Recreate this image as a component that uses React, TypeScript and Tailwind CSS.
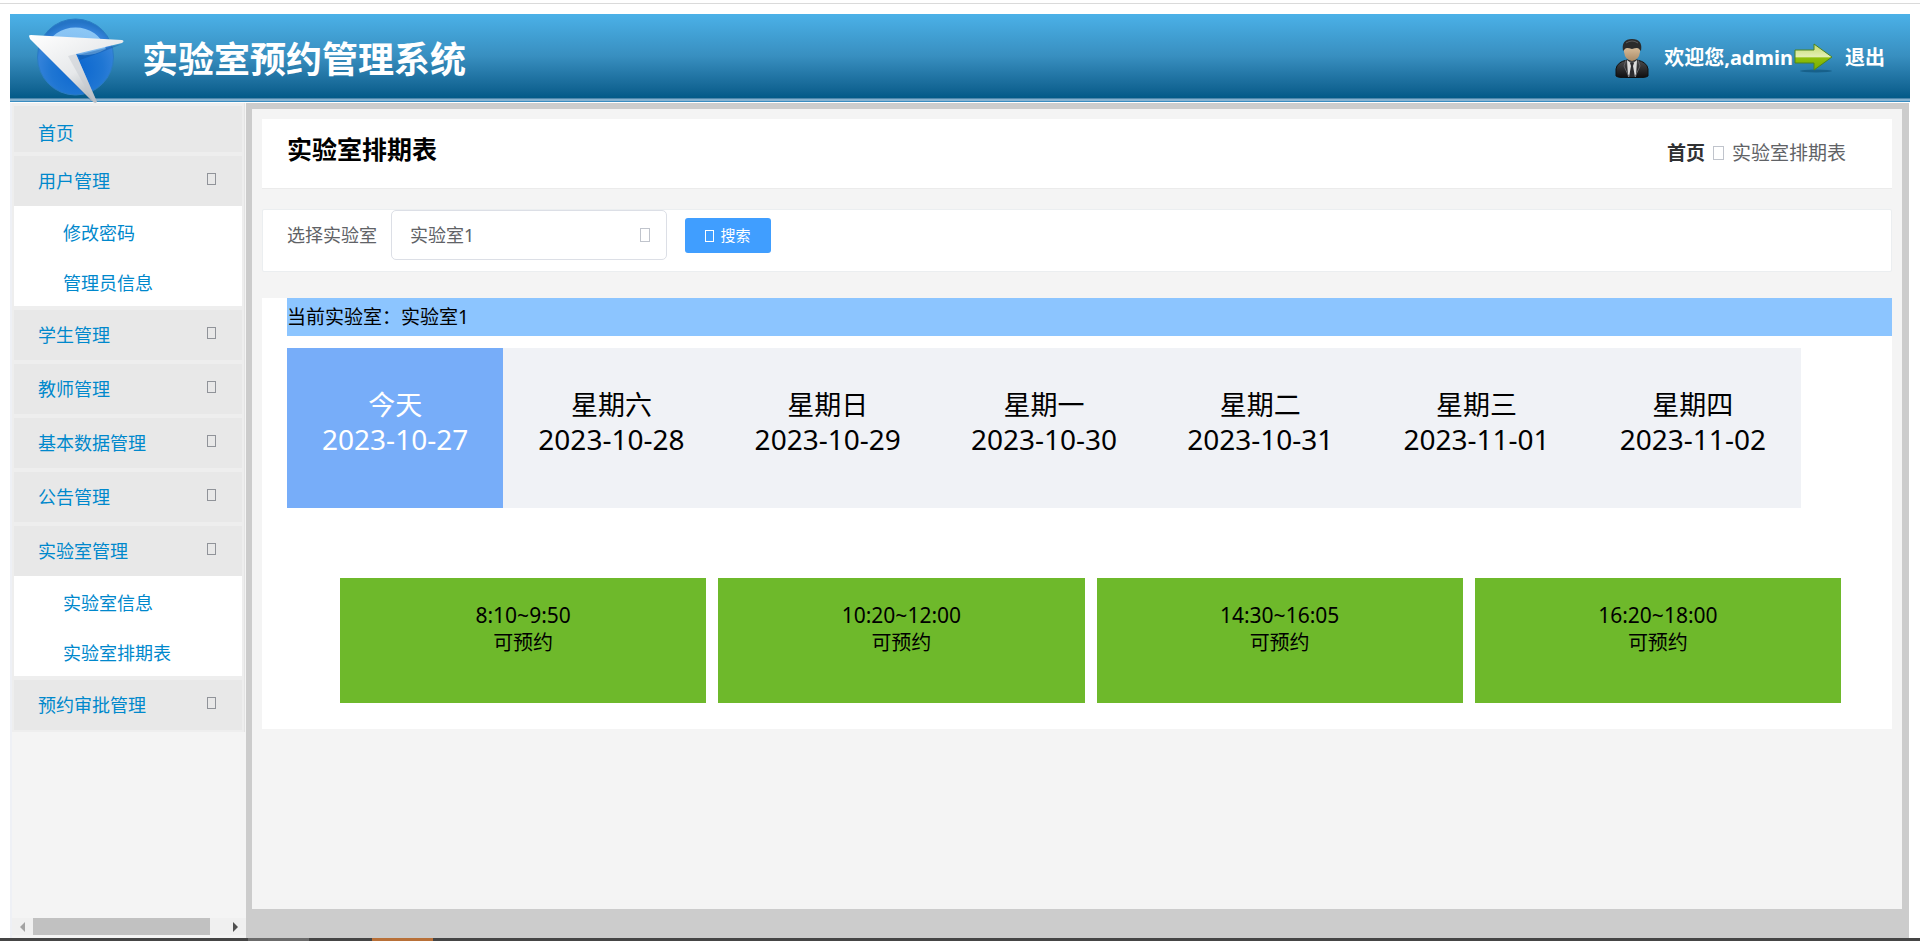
import { clsx } from "clsx";

type MenuEntry = {
  title: string;
  children?: string[];
};

const MENU: MenuEntry[] = [
  { title: "用户管理", children: ["修改密码", "管理员信息"] },
  { title: "学生管理" },
  { title: "教师管理" },
  { title: "基本数据管理" },
  { title: "公告管理" },
  { title: "实验室管理", children: ["实验室信息", "实验室排期表"] },
  { title: "预约审批管理" },
];

const DAYS = [
  { label: "今天", date: "2023-10-27" },
  { label: "星期六", date: "2023-10-28" },
  { label: "星期日", date: "2023-10-29" },
  { label: "星期一", date: "2023-10-30" },
  { label: "星期二", date: "2023-10-31" },
  { label: "星期三", date: "2023-11-01" },
  { label: "星期四", date: "2023-11-02" },
];

const SLOTS = ["8:10~9:50", "10:20~12:00", "14:30~16:05", "16:20~18:00"];

/** The empty box that stands where an icon font glyph is missing. */
function GlyphBox({ className }: { className?: string }) {
  return <span aria-hidden className={clsx("inline-block shrink-0 border", className)} />;
}

function Logo() {
  return (
    <svg aria-hidden viewBox="0 0 96 88" className="mt-1 h-22 w-24 shrink-0">
      <defs>
        <radialGradient id="globe" cx="0.52" cy="0.66" r="0.62">
          <stop offset="0" stopColor="#0b66cf" />
          <stop offset="0.55" stopColor="#1f76d3" />
          <stop offset="0.85" stopColor="#3583da" />
          <stop offset="1" stopColor="#2474c6" />
        </radialGradient>
        <linearGradient id="globeShine" x1="0.6" y1="0" x2="0.4" y2="1">
          <stop offset="0" stopColor="#8cc8f6" />
          <stop offset="1" stopColor="#a8d6fa" stopOpacity="0.6" />
        </linearGradient>
        <linearGradient id="wing" x1="0" y1="0" x2="0.7" y2="1">
          <stop offset="0" stopColor="#ffffff" />
          <stop offset="0.6" stopColor="#e6e8ea" />
          <stop offset="1" stopColor="#a9afb5" />
        </linearGradient>
      </defs>
      <circle cx="47.5" cy="41" r="38" fill="url(#globe)" stroke="#2a7cc4" />
      <path d="M17 33A32 31 0 0 1 78 33Q62 42 48 38Q32 32 17 33Z" fill="url(#globeShine)" />
      <path d="M2 22L64 86L56 72L10 26Z" fill="#0a4b94" opacity="0.35" />
      <path d="M50 39L94 28L74 36L52 44Z" fill="#0a4b94" opacity="0.35" />
      <path d="M1 20Q1 19 3 19L94 24Q97 25 94 27L48 38L69 86Q67 88 64 85L2 23Z" fill="url(#wing)" />
      <path d="M48 38L69 86L66 87L40 40Z" fill="#c5cacf" opacity="0.5" />
    </svg>
  );
}

function UserIcon() {
  return (
    <svg aria-hidden viewBox="0 0 34 40" className="h-10 w-[34px]">
      <defs>
        <linearGradient id="face" x1="0" y1="0" x2="0" y2="1">
          <stop offset="0" stopColor="#ead2b0" />
          <stop offset="1" stopColor="#a98a66" />
        </linearGradient>
        <linearGradient id="suit" x1="0" y1="0" x2="0" y2="1">
          <stop offset="0" stopColor="#4b4b4d" />
          <stop offset="1" stopColor="#0d0d0f" />
        </linearGradient>
      </defs>
      <path d="M1 38V31Q2 24 12 22H22Q32 24 33 31V38Q31 40 17 40Q3 40 1 38Z" fill="url(#suit)" stroke="#111" />
      <path d="M12 22L17 26L22 22L21 39H13Z" fill="#dcdcdc" />
      <path d="M15 25H19L18 28L20 39H14L16 28Z" fill="#2c2c30" />
      <path d="M11 22L9 28L14 39M23 22L25 28L20 39" fill="none" stroke="#606064" />
      <path d="M9 9Q9 4 17 4Q25 4 25 9V14Q24 22 17 23Q10 22 9 14Z" fill="url(#face)" />
      <path d="M8 13Q6 1 17 1Q28 1 26 13L24 11Q23 9 17 11Q11 9 10 11Z" fill="#2b2b2b" />
      <path d="M11 5Q17 1 23 5" fill="none" stroke="#5b5b5b" />
    </svg>
  );
}

function ArrowIcon() {
  return (
    <svg aria-hidden viewBox="0 0 40 30" className="h-[30px] w-10">
      <defs>
        <linearGradient id="arrow" x1="0" y1="0" x2="0" y2="1">
          <stop offset="0" stopColor="#c3da6a" />
          <stop offset="0.48" stopColor="#e4efb4" />
          <stop offset="0.54" stopColor="#8fbf0c" />
          <stop offset="1" stopColor="#77ae00" />
        </linearGradient>
      </defs>
      <ellipse cx="23" cy="28" rx="16" ry="1.5" fill="#0b4a70" opacity="0.55" />
      <path d="M2 7H21V1L39 14L21 27V20H2Z" fill="url(#arrow)" stroke="#4c8420" strokeLinejoin="round" />
    </svg>
  );
}

function Header() {
  return (
    <header className="mx-2.5 flex h-[89px] flex-col">
      <div className="flex h-21 items-center justify-between bg-linear-to-b from-[#4bb1e8] via-[#388fc0] to-[#035a88] pt-1 pr-[25px] pl-[18px] text-white">
        <div className="relative z-10 flex items-center">
          <Logo />
          <h1 className="ml-[18px] pt-1 text-4xl font-bold">实验室预约管理系统</h1>
        </div>
        <div className="flex items-center text-xl font-bold">
          <UserIcon />
          <span className="ml-[15px]">欢迎您,admin</span>
          <ArrowIcon />
          <a href="#logout" className="ml-3">
            退出
          </a>
        </div>
      </div>
      <div className="h-1 border-t border-b border-t-[#4d87ab] border-b-[#3a8cc0] bg-[#86b2d0]" />
    </header>
  );
}

function Sidebar() {
  return (
    <aside className="flex w-[236px] shrink-0 flex-col border-l-2 border-[#eef0f5] bg-[#f4f4f4]">
      <nav className="mr-px flex flex-col gap-1 border-r border-[#e4e4e4] bg-[#eeeeee] pt-[3px] pr-0.5 pb-0.5 pl-0.5 text-lg text-[#0088cc]">
        <a href="#home" className="flex h-[46px] items-center bg-[#e8e8e8] pt-2 pl-6">
          首页
        </a>
        {MENU.map((entry) => (
          <div key={entry.title}>
            <button
              type="button"
              className="flex h-[50px] w-full items-center justify-between bg-[#e8e8e8] pr-[26px] pl-6"
            >
              {entry.title}
              <GlyphBox className="mb-1 h-3 w-[9px] border-[#909399]" />
            </button>
            {entry.children?.map((child) => (
              <a key={child} href="#menu" className="flex h-[50px] items-center bg-white pt-1 pl-[49px]">
                {child}
              </a>
            ))}
          </div>
        ))}
      </nav>

      {/* Horizontal scroll track of the menu pane */}
      <div className="mt-auto mb-[3px] flex h-[17px] items-center bg-[#f0f0f0] pr-2 pl-2">
        <svg aria-hidden viewBox="0 0 5 10" className="h-2.5 w-[5px]">
          <path d="M5 0V10L0 5Z" fill="#a3a3a3" />
        </svg>
        <span className="ml-2 h-full w-[177px] bg-[#c1c1c1]" />
        <svg aria-hidden viewBox="0 0 5 10" className="ml-auto h-2.5 w-[5px]">
          <path d="M0 0V10L5 5Z" fill="#505050" />
        </svg>
      </div>
    </aside>
  );
}

function SearchForm() {
  return (
    <form
      onSubmit={(event) => event.preventDefault()}
      className="mt-5 flex h-[63px] items-start rounded-xs border border-[#ebeef0] bg-white pl-6 text-lg text-[#606266]"
    >
      <label htmlFor="lab" className="pt-[11px]">
        选择实验室
      </label>
      <div className="relative ml-3.5">
        <select
          id="lab"
          className="h-[50px] w-[276px] appearance-none rounded-[5px] border border-[#dcdfe6] bg-white pl-[18px]"
        >
          <option>实验室1</option>
        </select>
        <GlyphBox className="pointer-events-none absolute top-[18px] right-[17px] h-3.5 w-2.5 border-[#c0c4cc]" />
      </div>
      <button
        type="submit"
        className="mt-2 ml-[18px] flex h-[35px] w-[86px] items-center justify-center gap-1.5 rounded-[3px] bg-[#409eff] text-[15px] text-white"
      >
        <GlyphBox className="h-3 w-[9px] border-white" />
        搜索
      </button>
    </form>
  );
}

function Schedule() {
  return (
    <section className="mt-[26px] bg-white pb-[26px] pl-[25px]">
      <p className="flex h-[38px] items-center bg-[#8cc5ff] text-[19px] text-black">当前实验室：实验室1</p>

      <div className="mt-3 mr-[91px] grid grid-cols-7 bg-[#f0f2f6]">
        {DAYS.map((day, index) => (
          <button
            key={day.date}
            type="button"
            className={clsx(
              "flex h-40 flex-col items-center pt-10 leading-[34px]",
              index === 0 ? "bg-[#77adf9] text-white" : "text-black",
            )}
          >
            <span className="text-[27px]">{day.label}</span>
            <span className="text-[28px]">{day.date}</span>
          </button>
        ))}
      </div>

      <div className="mt-[70px] mr-[51px] ml-[53px] grid grid-cols-4 gap-3 leading-[27px] text-black">
        {SLOTS.map((slot) => (
          <button key={slot} type="button" className="flex h-[125px] flex-col items-center bg-[#6eb92b] pt-6">
            <span className="text-[21px]">{slot}</span>
            <span className="text-[20px]">可预约</span>
          </button>
        ))}
      </div>
    </section>
  );
}

export default function App() {
  return (
    <div className="flex min-h-screen flex-col bg-white font-['Noto_Sans','Noto_Sans_CJK_SC',sans-serif]">
      <div className="mb-2.5 h-1 border-b border-[#dadada]" />
      <Header />

      <div className="mr-[11px] ml-2.5 flex flex-1">
        <Sidebar />
        <main className="flex min-w-0 flex-1 flex-col bg-[#cccccc] pt-1.5 pr-[7px] pb-[29px] pl-1.5">
          <div className="flex-1 bg-[#f4f4f4] p-2.5">
            <div className="flex h-[70px] items-start justify-between border-b border-[#ebebeb] bg-white pr-[46px] pl-[25px]">
              <h2 className="pt-3 text-[25px] leading-9 font-bold text-black">实验室排期表</h2>
              <nav className="flex items-center gap-2 pt-5 text-[19px] leading-7 text-[#606266]">
                <a href="#home" className="font-bold text-[#303133]">
                  首页
                </a>
                <GlyphBox className="h-3.5 w-[11px] border-[#c0c4cc]" />
                <span>实验室排期表</span>
              </nav>
            </div>
            <SearchForm />
            <Schedule />
          </div>
        </main>
      </div>

      <div className="flex h-[3px] bg-[#454545] pl-[248px]">
        <span className="w-[61px] bg-[#6b6b6b]" />
        <span className="ml-[63px] w-[61px] bg-[#b87038]" />
      </div>
    </div>
  );
}
